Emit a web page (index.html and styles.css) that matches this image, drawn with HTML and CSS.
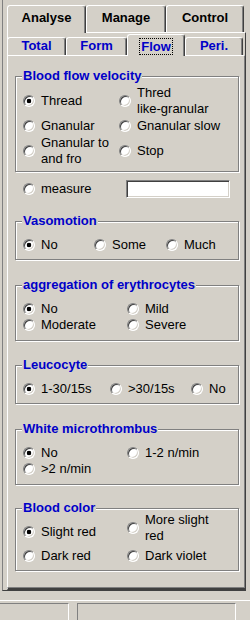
FILE: index.html
```html
<!DOCTYPE html>
<html lang="en">
<head>
    <meta charset="UTF-8">
    <title>Flow</title>
    <link rel="stylesheet" href="styles.css">
</head>
<body>

    <div class="frame">
        <!-- Top tabs -->
        <div class="maintabs">
            <div class="tab tab-analyse active">Analyse</div>
            <div class="tab tab-manage">Manage</div>
            <div class="tab tab-control">Control</div>
        </div>

        <div class="page">
            <!-- Second row of tabs -->
            <div class="subtabs">
                <div class="subtab sub-total">Total</div>
                <div class="subtab sub-form">Form</div>
                <div class="subtab sub-flow active"><span class="focus">Flow</span></div>
                <div class="subtab sub-peri">Peri.</div>
            </div>

            <div class="subpage">
                <fieldset class="group g-velocity">
                    <legend>Blood flow velocity</legend>
                    <div class="options cols-96">
                        <label class="opt"><input type="radio" class="radio" name="vel" checked><span>Thread</span></label>
                        <label class="opt"><input type="radio" class="radio" name="vel"><span>Thred<br>like-granular</span></label>
                        <label class="opt"><input type="radio" class="radio" name="vel"><span>Gnanular</span></label>
                        <label class="opt"><input type="radio" class="radio" name="vel"><span>Gnanular slow</span></label>
                        <label class="opt"><input type="radio" class="radio" name="vel"><span>Gnanular to<br>and fro</span></label>
                        <label class="opt"><input type="radio" class="radio" name="vel"><span>Stop</span></label>
                    </div>
                </fieldset>

                <div class="measure">
                    <label class="opt"><input type="radio" class="radio" name="vel"><span>measure</span></label>
                    <input type="text" class="edit">
                </div>

                <fieldset class="group g-vaso">
                    <legend>Vasomotion</legend>
                    <div class="options cols-vaso">
                        <label class="opt"><input type="radio" class="radio" name="vaso" checked><span>No</span></label>
                        <label class="opt"><input type="radio" class="radio" name="vaso"><span>Some</span></label>
                        <label class="opt"><input type="radio" class="radio" name="vaso"><span>Much</span></label>
                    </div>
                </fieldset>

                <fieldset class="group g-aggr">
                    <legend>aggregation of erythrocytes</legend>
                    <div class="options cols-104">
                        <label class="opt"><input type="radio" class="radio" name="aggr" checked><span>No</span></label>
                        <label class="opt"><input type="radio" class="radio" name="aggr"><span>Mild</span></label>
                        <label class="opt"><input type="radio" class="radio" name="aggr"><span>Moderate</span></label>
                        <label class="opt"><input type="radio" class="radio" name="aggr"><span>Severe</span></label>
                    </div>
                </fieldset>

                <fieldset class="group g-leuco">
                    <legend>Leucocyte</legend>
                    <div class="options cols-leuco">
                        <label class="opt"><input type="radio" class="radio" name="leuco" checked><span>1-30/15s</span></label>
                        <label class="opt"><input type="radio" class="radio" name="leuco"><span>&gt;30/15s</span></label>
                        <label class="opt"><input type="radio" class="radio" name="leuco"><span>No</span></label>
                    </div>
                </fieldset>

                <fieldset class="group g-micro">
                    <legend>White microthrombus</legend>
                    <div class="options cols-104">
                        <label class="opt"><input type="radio" class="radio" name="micro" checked><span>No</span></label>
                        <label class="opt"><input type="radio" class="radio" name="micro"><span>1-2 n/min</span></label>
                        <label class="opt"><input type="radio" class="radio" name="micro"><span>&gt;2 n/min</span></label>
                    </div>
                </fieldset>

                <fieldset class="group g-color">
                    <legend>Blood color</legend>
                    <div class="options cols-104">
                        <label class="opt"><input type="radio" class="radio" name="color" checked><span>Slight red</span></label>
                        <label class="opt raised"><input type="radio" class="radio" name="color"><span>More slight<br>red</span></label>
                        <label class="opt"><input type="radio" class="radio" name="color"><span>Dark red</span></label>
                        <label class="opt"><input type="radio" class="radio" name="color"><span>Dark violet</span></label>
                    </div>
                </fieldset>
            </div>
        </div>
    </div>

    <!-- Status bar -->
    <div class="statusbar">
        <div class="panel panel-left"></div>
        <div class="panel panel-main"></div>
    </div>

</body>
</html>
```

FILE: styles.css
```css
/* General Reset */
* {
    margin: 0;
    padding: 0;
    box-sizing: border-box;
}

body {
    width: 250px;
    height: 620px;
    overflow: hidden;
    background-color: #d4d0c8;
    color: #000;
    font-family: "Liberation Sans", Arial, sans-serif;
    font-size: 13px;
    line-height: 16px;
}

/* Outer frame */
.frame {
    margin-left: 2px;
    width: 244px;
    padding: 5px 0 0 4px;
    border-left: 1px solid #808080;
    border-bottom: 1px solid #404040;
}

/* Top tab row */
.maintabs {
    display: flex;
    align-items: flex-start;
    height: 27px;
}

.tab {
    height: 27px;
    line-height: 24px;
    text-align: center;
    font-weight: bold;
    background-color: #d4d0c8;
    border-top: 1px solid #fff;
    border-left: 1px solid #fff;
    border-right: 1px solid #404040;
    border-radius: 3px 3px 0 0;
    box-shadow: inset -1px 0 #808080;
}

.tab.active {
    position: relative;
    z-index: 1;
    height: 28px;
}

.tab-analyse { width: 79px; }
.tab-manage { width: 80px; }
.tab-control { width: 78px; }

/* Page under the top tabs */
.page {
    width: 239px;
    padding-top: 1px;
    border-top: 1px solid #fff;
    border-left: 1px solid #fff;
    border-right: 1px solid #404040;
    border-bottom: 2px solid #404040;
}

/* Second tab row */
.subtabs {
    display: flex;
    align-items: flex-end;
    height: 21px;
    margin-left: -1px;
}

.subtab {
    height: 18px;
    line-height: 16px;
    text-align: center;
    font-weight: bold;
    color: #0000c8;
    background-color: #d4d0c8;
    border-top: 1px solid #fff;
    border-left: 1px solid #fff;
    border-right: 1px solid #404040;
    border-radius: 3px 3px 0 0;
    box-shadow: inset -1px 0 #808080;
}

.subtab.active {
    position: relative;
    z-index: 1;
    height: 22px;
    margin-bottom: -1px;
    padding-top: 3px;
}

.focus {
    display: inline-block;
    padding: 0 1px;
    border: 1px dotted #000;
    line-height: 15px;
}

.sub-total { width: 59px; }
.sub-form { width: 61px; }
.sub-flow { width: 58px; }
.sub-peri { width: 58px; }

/* Page content */
.subpage {
    width: 238px;
    height: 533px;
    margin-left: -1px;
    padding: 12px 5px 0 7px;
    border-top: 1px solid #fff;
    border-left: 1px solid #fff;
    border-right: 1px solid #808080;
    border-bottom: 1px solid #808080;
}

/* Group boxes */
.group {
    width: 224px;
    margin: 0;
    padding: 8px 2px 6px 7px;
    border: 1px solid #808080;
    box-shadow: inset 1px 1px #fff, 1px 1px #fff;
}

.group legend {
    margin-left: -1px;
    padding: 0 1px;
    color: #0000c8;
    font-weight: bold;
    line-height: 16px;
    background-color: #d4d0c8;
}

.g-velocity { padding-top: 4px; padding-bottom: 8px; }
.g-vaso { margin-top: 15px; }
.g-aggr { margin-top: 17px; padding-bottom: 7px; }
.g-leuco { margin-top: 16px; }
.g-micro { margin-top: 17px; padding-bottom: 7px; }
.g-color { margin-top: 15px; padding-top: 0; }

/* Radio layouts */
.options {
    display: grid;
    grid-auto-rows: 16px;
}

.cols-96 { grid-template-columns: 96px 1fr; grid-auto-rows: 25px; }
.cols-104 { grid-template-columns: 104px 1fr; }
.cols-vaso { grid-template-columns: 71px 72px 1fr; }
.cols-leuco { grid-template-columns: 87px 81px 1fr; }

.g-color .options { grid-template-rows: 32px 16px; }

.opt {
    display: flex;
    align-items: center;
    gap: 6px;
    white-space: nowrap;
}

.opt.raised {
    align-self: start;
    margin-top: -4px;
}

.radio {
    appearance: none;
    flex: none;
    width: 12px;
    height: 12px;
    margin: 0;
    border-radius: 50%;
    border: 1px solid;
    border-color: #808080 #fff #fff #808080;
    box-shadow: inset 1px 1px #404040, inset -1px -1px #d4d0c8;
    background-color: #fff;
}

.radio:checked {
    background: radial-gradient(circle, #000 0 2px, #fff 2.6px);
}

/* Measure row */
.measure {
    display: grid;
    grid-template-columns: 103px 104px;
    align-items: center;
    height: 18px;
    margin-top: 8px;
    padding-left: 8px;
}

.edit {
    width: 104px;
    height: 18px;
    border: 1px solid;
    border-color: #808080 #fff #fff #808080;
    box-shadow: inset 1px 1px #404040, inset -1px -1px #d4d0c8;
    background-color: #fff;
    outline: none;
}

/* Status bar */
.statusbar {
    display: flex;
    margin-top: 9px;
    padding-top: 2px;
    border-top: 1px solid #fff;
}

.panel {
    height: 20px;
    border-top: 1px solid #808080;
    border-left: 1px solid #808080;
    border-right: 1px solid #fff;
}

.panel-left {
    width: 71px;
    margin-left: -2px;
}

.panel-main {
    width: 159px;
    margin-left: 8px;
}
```
